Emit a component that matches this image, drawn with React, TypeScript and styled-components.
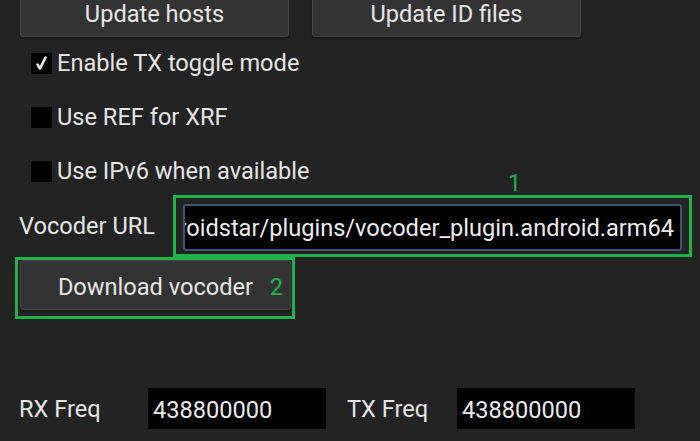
import React from "react";
import styled, { createGlobalStyle } from "styled-components";

const Global = createGlobalStyle`
  html, body { margin: 0; padding: 0; background: #232323; }
  body { font-family: Roboto, "Noto Sans", sans-serif; color: #e6e6e6; overflow: hidden; }
  * { box-sizing: border-box; }
`;

const GREEN = "#22b24c";
const FS = "23.6px";

const Page = styled.div`
  width: 700px;
  height: 441px;
  display: flex;
  flex-direction: column;
  overflow: hidden;
`;

const TopRow = styled.div`
  display: flex;
  gap: 23px;
  margin-top: -13px;
  padding-left: 20px;
`;

const Button = styled.button<{ $w?: number }>`
  width: ${(p) => p.$w ?? 269}px;
  height: 50px;
  background: #343333;
  border: 1px solid #464545;
  border-radius: 3px;
  box-shadow: 0 2px 1px #1a1a1a;
  color: #e6e6e6;
  font-family: Roboto, sans-serif;
  font-size: ${FS};
  padding: 4px 0 0 0;
  display: flex;
  align-items: center;
  justify-content: center;
`;

const CheckList = styled.div`
  display: flex;
  flex-direction: column;
  margin-top: -1px;
`;

const CheckRow = styled.label`
  height: 54px;
  display: flex;
  align-items: center;
  gap: 5px;
  padding-left: 31px;
  font-size: ${FS};
`;

const Box = styled.span`
  width: 21px;
  height: 21px;
  background: #000;
  display: flex;
  align-items: center;
  justify-content: center;
`;

const UrlRow = styled.div`
  display: flex;
  align-items: center;
  margin-top: -3px;
`;

const Label = styled.span<{ $w: number; $pl?: number }>`
  width: ${(p) => p.$w}px;
  padding-left: ${(p) => p.$pl ?? 0}px;
  font-size: ${FS};
  flex-shrink: 0;
`;

const Annot = styled.div<{ $pad: string }>`
  position: relative;
  border: 3px solid ${GREEN};
  padding: ${(p) => p.$pad};
  display: flex;
`;

const AnnotNum = styled.span<{ $left?: number; $top?: number; $right?: number }>`
  position: absolute;
  color: ${GREEN};
  font-size: ${FS};
  ${(p) => (p.$left !== undefined ? `left: ${p.$left}px;` : "")}
  ${(p) => (p.$right !== undefined ? `right: ${p.$right}px;` : "")}
  top: ${(p) => p.$top ?? 0}px;
  line-height: 1;
`;

const UrlField = styled.div`
  width: 499px;
  height: 47px;
  background: #000;
  border: 2px solid #3d556e;
  border-radius: 3px;
  display: flex;
  justify-content: flex-end;
  align-items: center;
  overflow: hidden;
  white-space: nowrap;
  padding: 1px 6px 0 0;
  font-size: ${FS};
  color: #ececec;
`;

const DownloadWrap = styled.div`
  display: flex;
  padding-left: 15px;
`;

const FreqRow = styled.div`
  display: flex;
  align-items: center;
  margin-top: 69px;
`;

const FreqField = styled.div`
  width: 178px;
  height: 41px;
  background: #000;
  display: flex;
  align-items: center;
  padding: 2px 0 0 5px;
  font-size: ${FS};
  color: #ececec;
  flex-shrink: 0;
`;

const Check = () => (
  <svg width="14" height="16" viewBox="0 0 14 16">
    <path d="M2.5 9.5 L5 13.5 L10.5 2.5" fill="none" stroke="#eaeaea" strokeWidth="2.6" strokeLinecap="round" strokeLinejoin="round" />
  </svg>
);

export default function App() {
  return (
    <Page>
      <Global />
      <TopRow>
        <Button>Update hosts</Button>
        <Button>Update ID files</Button>
      </TopRow>
      <CheckList>
        <CheckRow>
          <Box>
            <Check />
          </Box>
          Enable TX toggle mode
        </CheckRow>
        <CheckRow>
          <Box />
          Use REF for XRF
        </CheckRow>
        <CheckRow>
          <Box />
          Use IPv6 when available
        </CheckRow>
      </CheckList>
      <UrlRow>
        <Label $w={173} $pl={19}>Vocoder URL</Label>
        <Annot $pad="6px 7px 3px 7px">
          <AnnotNum $left={332} $top={-26}>1</AnnotNum>
          <UrlField>droidstar/plugins/vocoder_plugin.android.arm64</UrlField>
        </Annot>
      </UrlRow>
      <DownloadWrap>
        <Annot $pad="0 1px 6px 2px">
          <Button $w={271}>Download vocoder</Button>
          <AnnotNum $right={9} $top={16}>2</AnnotNum>
        </Annot>
      </DownloadWrap>
      <FreqRow>
        <Label $w={148} $pl={19}>RX Freq</Label>
        <FreqField>438800000</FreqField>
        <Label $w={131} $pl={21}>TX Freq</Label>
        <FreqField>438800000</FreqField>
      </FreqRow>
    </Page>
  );
}
